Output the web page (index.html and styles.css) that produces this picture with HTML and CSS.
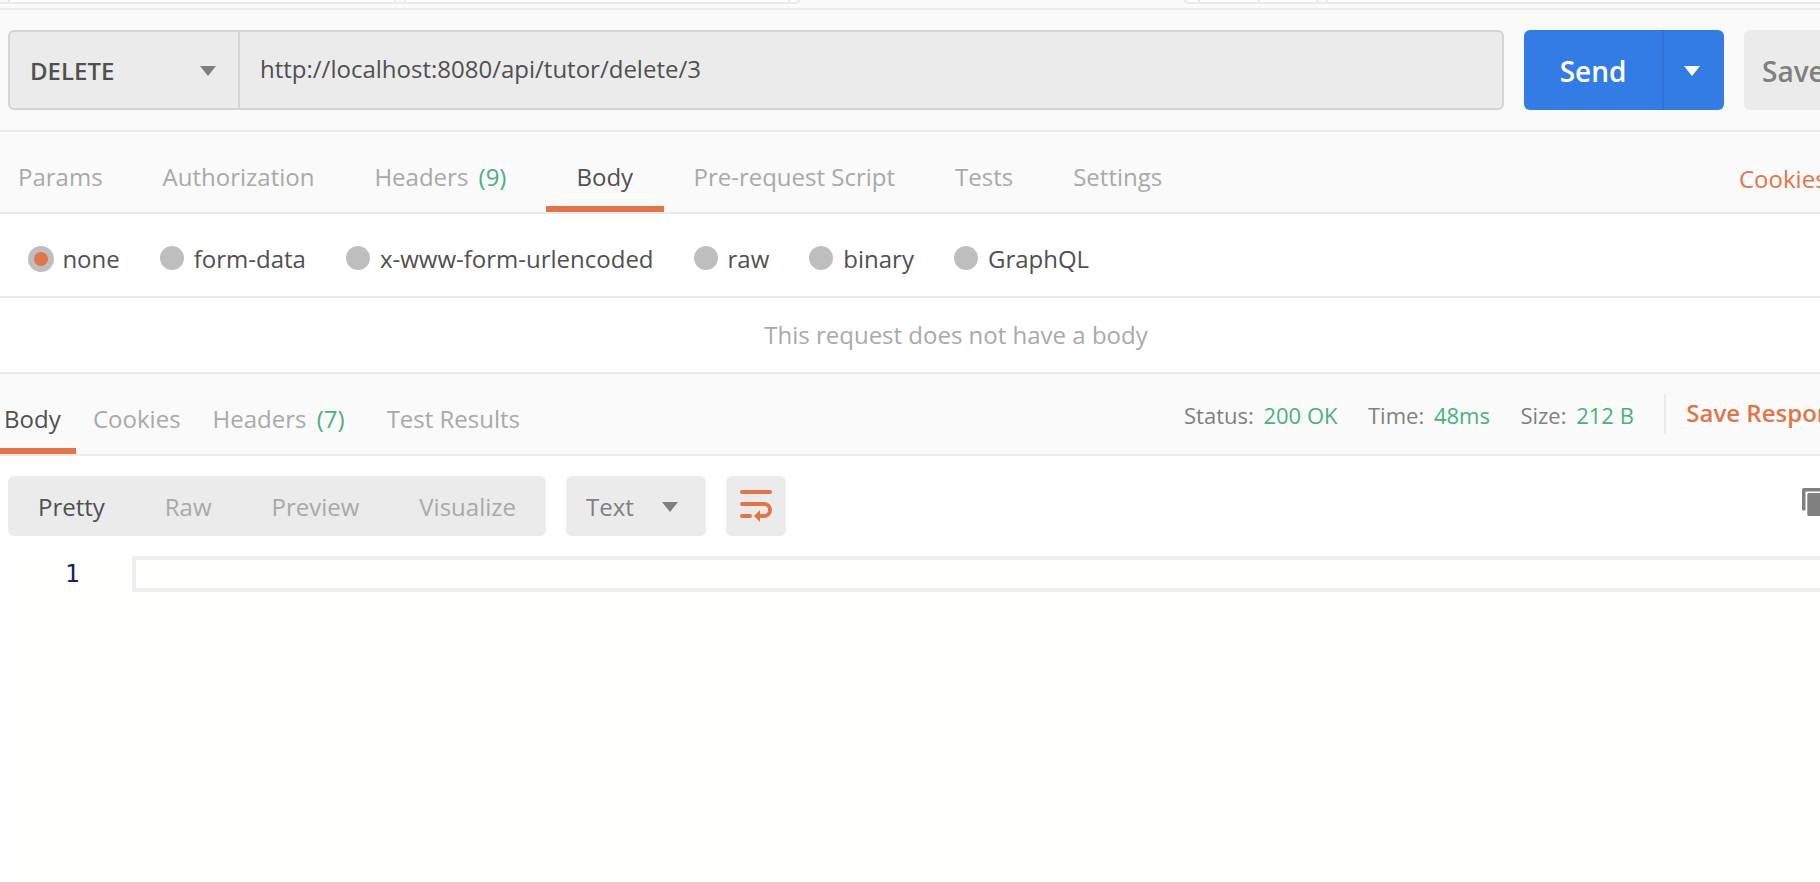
FILE: index.html
```html
<!DOCTYPE html>
<html lang="en">
<head>
<meta charset="utf-8">
<title>API client</title>
<link rel="stylesheet" href="styles.css">
</head>
<body>
<div class="app">
  <div class="tabstrip">
    <div class="strip-left"><i class="c1"></i><i class="c2"></i><i class="c3"></i><i class="c4"></i></div>
    <div class="strip-right"><i class="d1"></i><i class="d2"></i><i class="d3"></i><i class="gap"></i></div>
  </div>
  <div class="urlbar">
    <div class="request">
      <div class="method"><span>DELETE</span><svg class="caret" viewBox="0 0 16 10"><path d="M0 0h16L8 10z"/></svg></div>
      <div class="url">http://localhost:8080/api/tutor/delete/3</div>
    </div>
    <div class="send"><span class="send-label">Send</span><span class="send-more"><svg class="caret" viewBox="0 0 16 10"><path d="M0 0h16L8 10z"/></svg></span></div>
    <div class="save">Save</div>
  </div>
  <div class="tabs">
    <div class="tab">Params</div>
    <div class="tab">Authorization</div>
    <div class="tab counted">Headers <span class="count">(9)</span></div>
    <div class="tab active">Body</div>
    <div class="tab">Pre-request Script</div>
    <div class="tab">Tests</div>
    <div class="tab">Settings</div>
    <div class="cookies">Cookies</div>
  </div>
  <div class="modes">
    <div class="mode"><i class="radio on"></i>none</div>
    <div class="mode"><i class="radio"></i>form-data</div>
    <div class="mode"><i class="radio"></i>x-www-form-urlencoded</div>
    <div class="mode"><i class="radio"></i>raw</div>
    <div class="mode"><i class="radio"></i>binary</div>
    <div class="mode"><i class="radio"></i>GraphQL</div>
  </div>
  <div class="empty">This request does not have a body</div>
  <div class="response">
    <div class="rtab active">Body</div>
    <div class="rtab">Cookies</div>
    <div class="rtab">Headers <span class="count">(7)</span></div>
    <div class="rtab last">Test Results</div>
    <div class="meta">
      <div class="stat">Status: <b>200 OK</b></div>
      <div class="stat">Time: <b>48ms</b></div>
      <div class="stat">Size: <b>212 B</b></div>
      <div class="save-response">Save Response</div>
    </div>
  </div>
  <div class="toolbar">
    <div class="views"><span class="on">Pretty</span><span>Raw</span><span>Preview</span><span>Visualize</span></div>
    <div class="format"><span>Text</span><svg class="caret" viewBox="0 0 16 10"><path d="M0 0h16L8 10z"/></svg></div>
    <div class="wrap"><svg viewBox="0 0 32 32"><g fill="none" stroke="#e27449" stroke-width="4" stroke-linecap="round"><path d="M2 2h28M2 14h22a6 6 0 0 1 0 12h-4M2 26h8"/></g><path fill="#e27449" d="M14 26l6-6v12z"/></svg></div>
    <div class="copy"><svg viewBox="0 0 28 28"><path d="M0 21V2a2 2 0 0 1 2-2h20v3.500H3.500V21a1.750 1.750 0 0 1-3.500 0z"/><rect x="5.300" y="5" width="24" height="23" rx="1.500"/></svg></div>
  </div>
  <div class="editor">
    <div class="gutter">1</div>
    <div class="code"><div class="line"></div></div>
  </div>
</div>
</body>
</html>
```

FILE: styles.css
```css
* { box-sizing: border-box; }
body { margin: 0; background: #fff; }
.app {
  width: 1820px; height: 882px; overflow: hidden;
  display: flex; flex-direction: column;
  font: 24px/34px "Open Sans", sans-serif; color: #505050; white-space: nowrap;
}
.app > div { flex-shrink: 0; }
.caret { display: block; width: 16px; height: 10px; margin-top: 2px; fill: #808080; }

.tabstrip { height: 10px; background: #fafafa; border-bottom: 2px solid #eaeaea; display: flex; align-items: flex-start; justify-content: space-between; }
.strip-left, .strip-right { display: flex; height: 4px; border-bottom: 2px solid #eaeaea; background: #fff; }
.strip-left { width: 800px; border-radius: 0 0 4px 0; border-right: 2px solid #eaeaea; }
.strip-right { width: 636px; border-radius: 0 0 0 4px; border-left: 2px solid #eaeaea; }
.strip-left i, .strip-right i { flex-shrink: 0; height: 2px; border-right: 2px solid #eaeaea; }
.c1 { width: 10px; background: #fafafa; }
.c2 { width: 386px; }
.c3 { width: 10px; background: #fafafa; }
.c4 { width: 384px; }
.d1 { width: 14px; }
.d2 { width: 60px; }
.d3 { width: 58px; }
.gap { width: 10px; background: #fafafa; }

.urlbar { height: 122px; padding: 20px 0 0 8px; display: flex; gap: 20px; background: #fafafa; border-bottom: 2px solid #eaeaea; }
.urlbar > div { height: 80px; flex-shrink: 0; }
.urlbar { padding-top: 20px; }
.request { width: 1496px; display: flex; background: #ebebeb; border: 2px solid #d4d4d4; border-radius: 6px; }
.method { width: 230px; padding: 0 22px 0 20px; display: flex; align-items: center; justify-content: space-between; border-right: 2px solid #d4d4d4; font-weight: 600; }
.method span { padding-top: 2px; }
.url { padding: 20px 0 0 20px; }
.send { width: 200px; display: flex; border-radius: 6px; background: #337ce6; color: #fff; font-size: 28px; font-weight: 600; }
.send-label { width: 138px; padding-top: 24px; text-align: center; }
.send-more { flex: 1; padding-right: 4px; display: flex; align-items: center; justify-content: center; border-left: 2px solid #2f72d4; }
.send .caret { fill: #fff; }
.save { width: 120px; padding: 24px 0 0 18px; border-radius: 6px; background: #ebebeb; color: #808080; font-size: 28px; font-weight: 600; }

.tabs { height: 82px; display: flex; background: #fafafa; border-bottom: 2px solid #eaeaea; color: #a9a9a9; }
.tab { height: 80px; padding: 28px 30px 0; }
.tab:first-child { padding-left: 18px; }
.tab.counted { padding-right: 40px; }
.count { margin-left: 4px; color: #4bb07f; }
.active { color: #505050; border-bottom: 6px solid #e27449; }
.tab.active { width: 118px; margin-right: -1px; }
.cookies { margin-left: auto; width: 81px; padding-top: 30px; color: #e27449; }

.modes { height: 84px; padding-left: 28px; display: flex; gap: 40px; border-bottom: 2px solid #eaeaea; }
.mode { display: flex; padding-top: 28px; }
.radio { width: 24px; height: 24px; margin: 4px 10px 0 0; border-radius: 50%; background: #bebebe; }
.radio.on { width: 26px; height: 26px; margin-right: 8.400px; border: 6px solid #bebebe; background: #e27449; }
.empty { height: 76px; padding: 20px 0 0 92px; text-align: center; border-bottom: 2px solid #eaeaea; color: #a9a9a9; }

.response { height: 82px; display: flex; background: #fafafa; border-bottom: 2px solid #eaeaea; color: #a9a9a9; }
.rtab { height: 80px; padding: 28px 16px 0; }
.rtab.active { padding-left: 4px; width: 76px; margin-right: 1px; }
.rtab.last { padding-left: 26px; }
.meta { margin-left: auto; width: 636px; display: flex; font-size: 22px; color: #808080; }
.stat { padding-top: 24px; margin-right: 30.500px; }
.stat b { margin-left: 4px; font-weight: 400; color: #4bb07f; }
.save-response { height: 40px; margin-top: 20px; padding: 2px 0 0 20px; border-left: 2px solid #eaeaea; font-size: 24px; font-weight: 600; color: #e27449; }

.toolbar { height: 100px; padding: 20px 0 0 8px; display: flex; gap: 20px; }
.views, .format, .wrap { height: 60px; border-radius: 6px; background: #ebebeb; }
.views { width: 538px; padding: 14px 30px 0; display: flex; justify-content: space-between; color: #a9a9a9; }
.views .on { color: #505050; }
.format { width: 140px; padding: 0 28px 0 20px; display: flex; justify-content: space-between; align-items: center; color: #808080; }
.format span { padding-top: 2px; }
.wrap { width: 60px; padding: 14px; }
.wrap svg { display: block; width: 32px; height: 32px; }
.copy { width: 18px; margin: 12px 0 0 auto; overflow: hidden; }
.copy svg { display: block; width: 28px; height: 28px; fill: #808080; }

.editor { height: 326px; display: flex; margin-left: 12px; background: #fffffe; }
.gutter { width: 120px; padding: 1px 0 0 53px; font-family: "DejaVu Sans Mono", monospace; font-size: 24px; color: #0b216f; }
.code { flex: 1; overflow: hidden; }
.line { height: 36px; border: 4px solid #eee; border-right: 0; }
```
